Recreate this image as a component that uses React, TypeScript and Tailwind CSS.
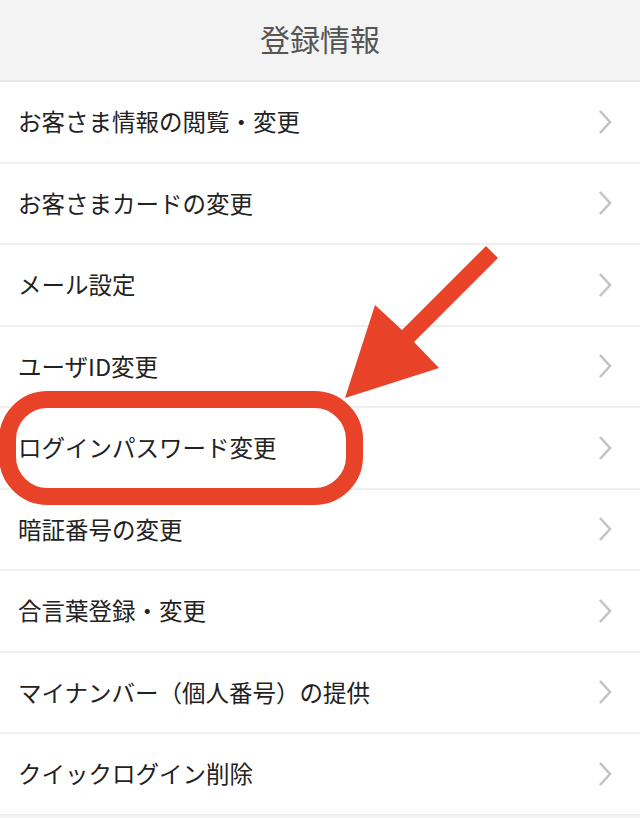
const items = [
  "お客さま情報の閲覧・変更",
  "お客さまカードの変更",
  "メール設定",
  "ユーザID変更",
  "ログインパスワード変更",
  "暗証番号の変更",
  "合言葉登録・変更",
  "マイナンバー（個人番号）の提供",
  "クイックログイン削除",
];

function Chevron() {
  return (
    <svg width="16" height="26" viewBox="0 0 16 26" className="shrink-0">
      <path d="M3 2 L13 13 L3 24" fill="none" stroke="#c4c4c4" strokeWidth="2.6" />
    </svg>
  );
}

export default function App() {
  return (
    <div
      className="relative w-[640px] h-[818px] overflow-hidden bg-[#f3f3f3]"
      style={{ fontFamily: '"Noto Sans CJK JP", "Noto Sans", sans-serif' }}
    >
      <header className="h-[82px] flex items-center justify-center border-b-2 border-[#e8e8e8] bg-[#f3f3f3]">
        <h1 className="text-[30px] text-[#555555] -mt-1">登録情報</h1>
      </header>

      <ul className="bg-white">
        {items.map((label) => (
          <li
            key={label}
            className="h-[81.5px] box-border flex items-center justify-between pl-[18px] pr-[27px] border-b-2 border-[#efefef]"
          >
            <span className="text-[23.5px] text-[#222222] leading-none">{label}</span>
            <Chevron />
          </li>
        ))}
      </ul>

      {/* annotation overlay */}
      <svg
        className="absolute inset-0 pointer-events-none"
        width="640"
        height="818"
        viewBox="0 0 640 818"
      >
        <rect
          x="7.5"
          y="399.5"
          width="347"
          height="97"
          rx="40"
          fill="none"
          stroke="#e84328"
          strokeWidth="17"
        />
        <polygon
          points="486,246 498,258 414,342 439,368 345,398 375,305 402,330"
          fill="#e84328"
        />
      </svg>
    </div>
  );
}
